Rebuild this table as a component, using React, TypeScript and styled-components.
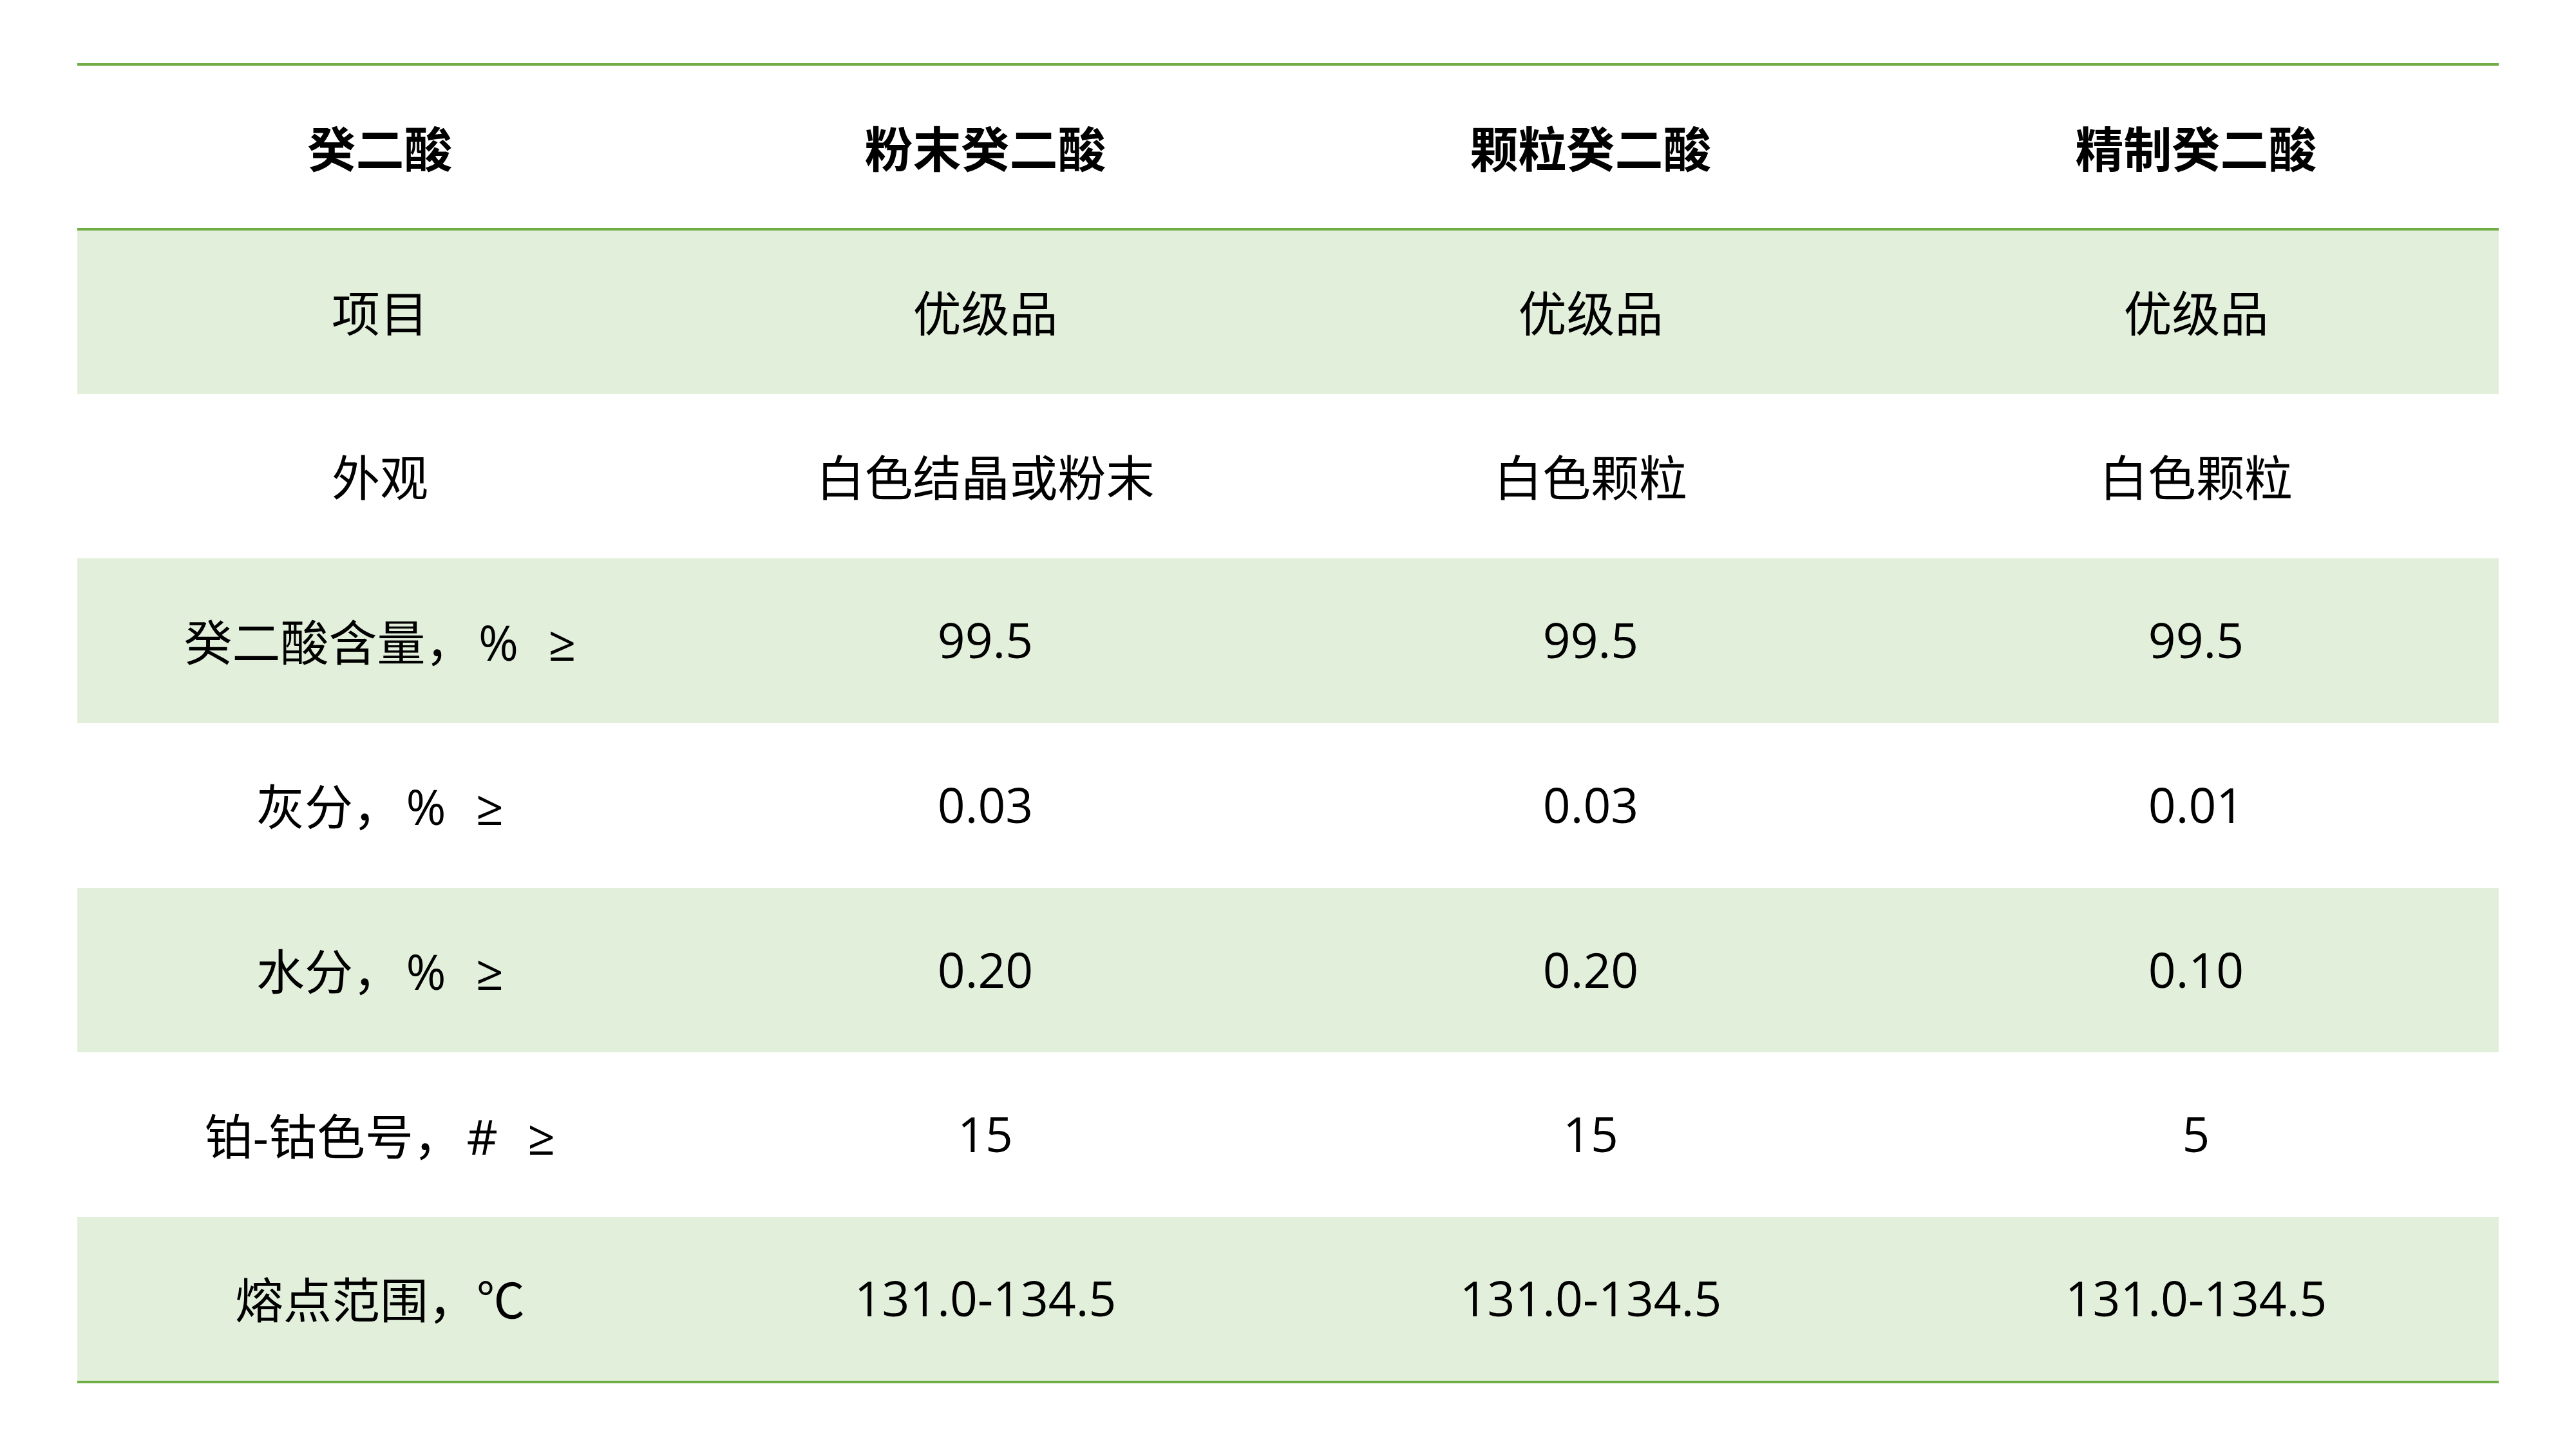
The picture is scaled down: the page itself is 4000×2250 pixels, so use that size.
import React from 'react';
import styled, { createGlobalStyle } from 'styled-components';

const GlobalStyle = createGlobalStyle`
  html, body {
    margin: 0;
    padding: 0;
    background: #fff;
  }
`;

const Page = styled.div`
  width: 4000px;
  height: 2250px;
  box-sizing: border-box;
  padding: 98px 120px 0;
  background: #fff;
  font-family: 'Open Sans', 'Noto Sans CJK SC', sans-serif;
  color: #000;
`;

const Table = styled.table`
  width: 100%;
  border-collapse: collapse;
  table-layout: fixed;
  border-top: 4px solid #70ad47;
  border-bottom: 4px solid #70ad47;
`;

const HeadRow = styled.tr`
  height: 256px;
  border-bottom: 4px solid #70ad47;
`;

const Th = styled.th`
  font-size: 75px;
  font-weight: 700;
  text-align: center;
  vertical-align: middle;
  padding: 0 0 2px;
`;

const Row = styled.tr<{ $shaded: boolean }>`
  height: 255.7px;
  background: ${props => (props.$shaded ? '#e2efda' : '#fff')};
`;

const Td = styled.td`
  font-size: 75px;
  font-weight: 400;
  text-align: center;
  vertical-align: middle;
  padding: 0 0 4px;
  white-space: pre;
`;

const headers = ['癸二酸', '粉末癸二酸', '颗粒癸二酸', '精制癸二酸'];

const rows = [
  ['项目', '优级品', '优级品', '优级品'],
  ['外观', '白色结晶或粉末', '白色颗粒', '白色颗粒'],
  ['癸二酸含量，\u200a%  \u200a≥', '99.5', '99.5', '99.5'],
  ['灰分，\u200a%  \u200a≥', '0.03', '0.03', '0.01'],
  ['水分，\u200a%  \u200a≥', '0.20', '0.20', '0.10'],
  ['铂-钴色号，\u200a#  \u200a≥', '15', '15', '5'],
  ['熔点范围，℃', '131.0-134.5', '131.0-134.5', '131.0-134.5'],
];

const App: React.FC = () => {
  return (
    <Page>
      <GlobalStyle />
      <Table>
        <thead>
          <HeadRow>
            {headers.map(h => (
              <Th key={h}>{h}</Th>
            ))}
          </HeadRow>
        </thead>
        <tbody>
          {rows.map((row, i) => (
            <Row key={row[0]} $shaded={i % 2 === 0}>
              {row.map((cell, j) => (
                <Td key={j}>{cell}</Td>
              ))}
            </Row>
          ))}
        </tbody>
      </Table>
    </Page>
  );
};

export default App;
